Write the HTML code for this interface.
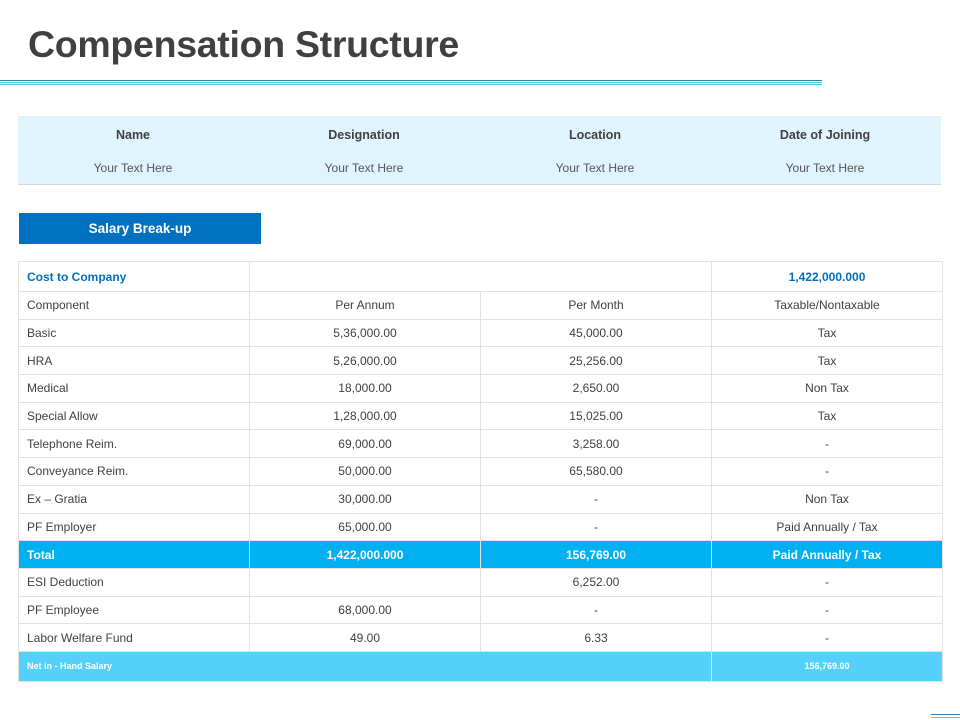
<!DOCTYPE html>
<html><head><meta charset="utf-8"><style>
body{margin:0;width:960px;height:720px;background:#fff;position:relative;font-family:"Liberation Sans",sans-serif;overflow:hidden}
.t{position:absolute;left:28px;top:23px;font-size:37.5px;font-weight:bold;color:#404040;letter-spacing:-0.3px}
.l{position:absolute;left:0;width:822px;height:1px}
.info{position:absolute;left:18px;top:116px;width:923px;height:67px;background:#dff4fd;border-top:1px solid #e4eef2;border-bottom:1px solid #cfd8dc}
.info div{position:absolute;width:230px;text-align:center;font-size:12px;color:#555}
.btn{position:absolute;left:19px;top:213px;width:242px;height:31px;background:#0070c0;color:#fff;font-weight:bold;font-size:13.5px;text-align:center;line-height:31px}
table{position:absolute;left:18px;top:261px;width:924px;border-collapse:collapse;table-layout:fixed;font-size:12px;color:#404040}
td{border:1px solid #e2e2e2;height:26.7px;padding:0;text-align:center}
td:first-child{text-align:left;padding-left:8px}
.tot td{background:#00b0f0;color:#fff;font-weight:bold;border-color:#e2e2e2}
.net td{background:#55d0fb;color:#fff;font-weight:bold;font-size:9px;height:29px}
.blue{color:#0070c0;font-weight:bold}
</style></head><body>
<div class="t">Compensation Structure</div>
<div class="l" style="top:80px;background:#2e7ea6"></div>
<div class="l" style="top:82px;background:#5bc3df"></div>
<div class="l" style="top:84px;background:#5bc3df"></div>
<div class="info">
<div style="left:0;top:11px;font-weight:bold;color:#404040;font-size:12.5px">Name</div>
<div style="left:231px;top:11px;font-weight:bold;color:#404040;font-size:12.5px">Designation</div>
<div style="left:462px;top:11px;font-weight:bold;color:#404040;font-size:12.5px">Location</div>
<div style="left:692px;top:11px;font-weight:bold;color:#404040;font-size:12.5px">Date of Joining</div>
<div style="left:0;top:44px">Your Text Here</div>
<div style="left:231px;top:44px">Your Text Here</div>
<div style="left:462px;top:44px">Your Text Here</div>
<div style="left:692px;top:44px">Your Text Here</div>
</div>
<div class="btn">Salary Break-up</div>
<table>
<colgroup><col style="width:231px"><col style="width:231px"><col style="width:231px"><col style="width:231px"></colgroup>
<tr style="height:30px"><td class="blue" style="height:29px">Cost to Company</td><td colspan="2"></td><td class="blue">1,422,000.000</td></tr>
<tr><td>Component</td><td>Per Annum</td><td>Per Month</td><td>Taxable/Nontaxable</td></tr>
<tr><td>Basic</td><td>5,36,000.00</td><td>45,000.00</td><td>Tax</td></tr>
<tr><td>HRA</td><td>5,26,000.00</td><td>25,256.00</td><td>Tax</td></tr>
<tr><td>Medical</td><td>18,000.00</td><td>2,650.00</td><td>Non Tax</td></tr>
<tr><td>Special Allow</td><td>1,28,000.00</td><td>15,025.00</td><td>Tax</td></tr>
<tr><td>Telephone Reim.</td><td>69,000.00</td><td>3,258.00</td><td>-</td></tr>
<tr><td>Conveyance Reim.</td><td>50,000.00</td><td>65,580.00</td><td>-</td></tr>
<tr><td>Ex – Gratia</td><td>30,000.00</td><td>-</td><td>Non Tax</td></tr>
<tr><td>PF Employer</td><td>65,000.00</td><td>-</td><td>Paid Annually / Tax</td></tr>
<tr class="tot"><td>Total</td><td>1,422,000.000</td><td>156,769.00</td><td>Paid Annually / Tax</td></tr>
<tr><td>ESI Deduction</td><td></td><td>6,252.00</td><td>-</td></tr>
<tr><td>PF Employee</td><td>68,000.00</td><td>-</td><td>-</td></tr>
<tr><td>Labor Welfare Fund</td><td>49.00</td><td>6.33</td><td>-</td></tr>
<tr class="net"><td colspan="3">Net in - Hand Salary</td><td>156,769.00</td></tr>
</table>
<div style="position:absolute;left:931px;top:714px;width:29px;height:1px;background:#2e7ea6"></div>
<div style="position:absolute;left:931px;top:717px;width:29px;height:1px;background:#5bc3df"></div>
</body></html>
